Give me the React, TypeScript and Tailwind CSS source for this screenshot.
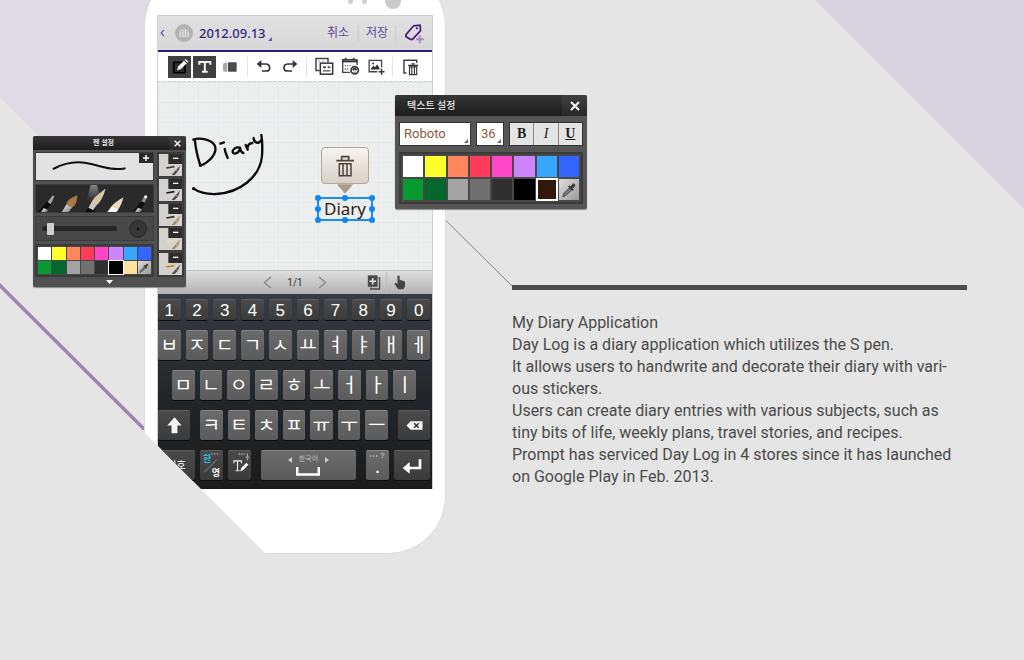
import React, { useState } from "react";

type Children = { children?: React.ReactNode };

const BASE_COLORS = [
  "#ffffff", "#ffff2b", "#ff855c", "#ff3b5c", "#ff47c8", "#cc85ff", "#38a6ff", "#3366ff",
  "#079a2e", "#04672c", "#a3a3a3", "#707070", "#303030",
];
const TEXT_COLORS = [...BASE_COLORS, "#000000", "#321809"];
const PEN_COLORS = [...BASE_COLORS, "#000000", "#ffe0a0"];

function Dropper({ className }: { className: string }) {
  return (
    <svg viewBox="0 0 20 20" className={className} aria-hidden="true">
      <path d="M3 17.5 L4.2 14 L10.4 7.6 L12.8 10 L6.6 16.2 Z" fill="#777" stroke="#444" strokeWidth="1" />
      <path d="M9 6.2 L10.6 4.8 L11.8 5.8 L14 3.2 C15.4 2 17.8 3.8 16.8 5.8 L14.2 8.4 L15.2 9.6 L13.8 11.2 Z" fill="#3a3a3a" />
    </svg>
  );
}

function Cross({ className }: { className: string }) {
  return (
    <svg viewBox="0 0 10 10" className={className} aria-hidden="true">
      <path d="M1 1 L9 9 M9 1 L1 9" stroke="#fff" strokeWidth="1.9" />
    </svg>
  );
}

function ToolDivider() {
  return <span className="mx-[3px] h-5 w-px shrink-0 bg-[#e2e2e2]" />;
}

function TitleBar() {
  return (
    <header className="flex h-[36px] items-center border-b-2 border-[#2c1d7d] bg-linear-to-b from-[#e0e0e0] to-[#d8d8d8]">
      <button aria-label="Back" className="flex w-[17px] justify-start pl-[2px]">
        <svg viewBox="0 0 5 9" className="h-[8px] w-[5px]" aria-hidden="true">
          <path d="M4.2 1 L1 4.5 L4.2 8" fill="none" stroke="#5846a4" strokeWidth="1.3" />
        </svg>
      </button>
      <svg viewBox="0 0 54 54" className="size-[18px] shrink-0" aria-hidden="true">
        <circle cx="27" cy="27" r="27" fill="#b3b3b3" />
        <path d="M16 22 V40 M24 17 V40 M31 17 V40 M39 23 V40" stroke="#e4e4e4" strokeWidth="4" />
        <path d="M14 22 L23 16 M31 17 L39 22" stroke="#e4e4e4" strokeWidth="2.5" />
      </svg>
      <button className="ml-[6px] flex items-end font-['Noto_Sans',sans-serif] text-[13px] leading-[18px] font-medium text-[#35277f]">
        2012.09.13
        <svg viewBox="0 0 4 4" className="mb-[1px] ml-[2px] size-[4px]" aria-hidden="true">
          <path d="M4 0 V4 H0 Z" fill="#6a5aae" />
        </svg>
      </button>
      <button className="ml-auto w-10 text-[12px] leading-[18px] text-[#5b4c9e]">취소</button>
      <span className="h-4 w-px bg-[#cbcbcb]" />
      <button className="w-9 text-[12px] leading-[18px] text-[#5b4c9e]">저장</button>
      <span className="h-4 w-px bg-[#cbcbcb]" />
      <button aria-label="Add tag" className="flex w-9 justify-center">
        <svg viewBox="792 70 62 64" className="h-[21px] w-[20px]" aria-hidden="true">
          <path d="M798 106 L822 78 L842 76 L843 94 L818 120 H811 L798 111 Z" fill="none" stroke="#4a1d7a" strokeWidth="5.500" strokeLinejoin="round" />
          <circle cx="832" cy="86" r="3.500" fill="#4a1d7a" />
          <path d="M841 108 V132 M829 120 H853" stroke="#a684cc" strokeWidth="6" />
        </svg>
      </button>
    </header>
  );
}

function Toolbar() {
  return (
    <div className="flex h-[29px] items-center bg-white pl-[10px]">
      <button aria-label="Pen" className="mr-[2px] flex w-[23px] shrink-0 justify-center bg-[#404042]">
        <svg viewBox="84 168 69 66" className="h-[22px] w-[23px]" aria-hidden="true">
          <rect x="101" y="187" width="34" height="31" fill="#2e2e2e" stroke="#000" strokeWidth="5" />
          <path d="M111 211 L115 199 L132 182 L140 190 L123 207 Z" fill="#fff" />
          <path d="M134 180 L137 177 L145 185 L142 188 Z" fill="#fff" />
        </svg>
      </button>
      <button aria-label="Text" className="flex w-[23px] shrink-0 justify-center bg-[#404042]">
        <svg viewBox="159 168 69 66" className="h-[22px] w-[23px]" aria-hidden="true">
          <path d="M178 194 V186 H211 V194 M194.500 186 V215 M186 215 H203" fill="none" stroke="#f4f4f4" strokeWidth="6" />
        </svg>
      </button>
      <button aria-label="Eraser" className="flex w-[28px] shrink-0 justify-center">
        <svg viewBox="246 182 48 36" className="h-[12px] w-[16px]" aria-hidden="true">
          <path d="M262 187 H254 Q249 187 249 192 V209 Q249 214 254 214 H262 Z" fill="#a9a9a9" />
          <rect x="264" y="186" width="26" height="28" rx="2" fill="#4b4b4b" />
        </svg>
      </button>
      <ToolDivider />
      <button aria-label="Undo" className="flex w-[26px] shrink-0 justify-center">
        <svg viewBox="350 180 48 42" className="h-[14px] w-[16px]" aria-hidden="true">
          <path d="M359 192 H381 Q391 193 391 203 Q391 213 381 213 H368" fill="none" stroke="#333" strokeWidth="5" />
          <path d="M352 192 L366 180 V204 Z" fill="#333" />
        </svg>
      </button>
      <button aria-label="Redo" className="flex w-[26px] shrink-0 justify-center">
        <svg viewBox="426 180 48 42" className="h-[14px] w-[16px]" aria-hidden="true">
          <path d="M465 192 H443 Q432 193 432 203 Q432 213 443 213 H456" fill="none" stroke="#333" strokeWidth="5" />
          <path d="M472 192 L458 180 V204 Z" fill="#333" />
        </svg>
      </button>
      <ToolDivider />
      <button aria-label="Copy" className="flex w-[28px] shrink-0 justify-center">
        <svg viewBox="525 172 57 56" className="h-[19px] w-[19px]" aria-hidden="true">
          <path d="M539 212 H528 V176 H564 V187" fill="none" stroke="#444" strokeWidth="4.500" />
          <rect x="541" y="190" width="37" height="33" fill="#fff" stroke="#333" strokeWidth="4.500" />
          <path d="M549 202 H558 M563 202 H571" stroke="#555" strokeWidth="6" />
          <path d="M549 213 H571" stroke="#555" strokeWidth="4" />
          <path d="M535 184 H541 M546 184 H552" stroke="#999" strokeWidth="3" />
        </svg>
      </button>
      <button aria-label="Calendar" className="flex w-[25px] shrink-0 justify-center">
        <svg viewBox="603 174 57 57" className="h-[19px] w-[19px]" aria-hidden="true">
          <path d="M630 220 H608 V182 H651 V198" fill="none" stroke="#444" strokeWidth="4" />
          <path d="M606 187 H653" stroke="#333" strokeWidth="6" />
          <path d="M617 176 V184 M641 176 V184" stroke="#333" strokeWidth="5" />
          <path d="M614 200 H634 M614 210 H628" stroke="#777" strokeWidth="4" strokeDasharray="4 3" />
          <circle cx="644" cy="214" r="11" fill="#fff" stroke="#333" strokeWidth="5" />
          <path d="M636 211 Q644 202 652 211 L648 215 L644 212 L640 215 Z" fill="#333" />
          <path d="M639 218 H649 Q644 224 639 218 Z" fill="#333" />
        </svg>
      </button>
      <button aria-label="Insert image" className="flex w-[26px] shrink-0 justify-center">
        <svg viewBox="680 176 57 52" className="h-[17px] w-[19px]" aria-hidden="true">
          <path d="M711 218 H686 V183 H724 V205" fill="none" stroke="#444" strokeWidth="4" />
          <path d="M691 210 L699 199 L704 204 L711 195 L718 208 V211 H691 Z" fill="#333" />
          <circle cx="698" cy="193" r="3" fill="#333" />
          <path d="M724 209 V227 M715 218 H733" stroke="#333" strokeWidth="4.500" />
        </svg>
      </button>
      <ToolDivider />
      <button aria-label="Delete page" className="flex w-[29px] shrink-0 justify-center">
        <svg viewBox="784 172 50 55" className="h-[18px] w-[17px]" aria-hidden="true">
          <path d="M797 218 H789 V179 H828 V187" fill="none" stroke="#444" strokeWidth="4.500" />
          <path d="M802 195 H832 M812 190 H822" stroke="#333" strokeWidth="4" />
          <path d="M806 199 H828 V223 H806 Z M813 199 V222 M821 199 V222" fill="none" stroke="#333" strokeWidth="3.500" />
        </svg>
      </button>
    </div>
  );
}

const HANDLES = [
  "-left-1 -top-1", "left-1/2 -ml-[3px] -top-1", "-right-1 -top-1",
  "-left-1 top-1/2 -mt-[3px]", "-right-1 top-1/2 -mt-[3px]",
  "-left-1 -bottom-1", "left-1/2 -ml-[3px] -bottom-1", "-right-1 -bottom-1",
];

function DiaryCanvas() {
  return (
    <div className="relative h-[189px] border-t border-dashed border-[#cfcfcf] bg-[#edefef] bg-[linear-gradient(#e3e8eb_1px,transparent_1px),linear-gradient(90deg,#e3e8eb_1px,transparent_1px),linear-gradient(#eaedee_1px,transparent_1px),linear-gradient(90deg,#eaedee_1px,transparent_1px)] bg-size-[20px_20px,20px_20px,5px_5px,5px_5px]">
      <svg viewBox="0 0 270 240" className="absolute top-[38px] left-[21px] h-[80px] w-[90px]" role="img" aria-label="Handwriting">
        <g fill="none" stroke="#0a0a0a" strokeWidth="7" strokeLinecap="round" strokeLinejoin="round">
          <path d="M48 62 C50 90 58 118 64 137" />
          <path d="M43 59 C62 52 98 58 108 78 C116 102 88 128 64 137" />
          <path d="M137 87 C139 98 143 106 146 114 M124 71 L135 67" />
          <path d="M183 83 C171 79 160 88 161 97 C166 107 182 97 183 85 C185 92 188 98 193 99" />
          <path d="M200 75 L206 89 C204 79 209 70 220 69" />
          <path d="M224 54 C224 69 240 74 247 60 M247 45 C250 62 250 92 249 108 C243 172 182 218 112 222 C84 223 58 216 44 206" />
        </g>
        <circle cx="44" cy="206" r="5" fill="#0a0a0a" />
      </svg>
      <div className="absolute top-[65px] left-[163px] flex flex-col items-center">
        <button aria-label="Delete text" className="flex h-[37px] w-[48px] items-center justify-center rounded-[4px] border border-[#b3a797] bg-linear-to-b from-[#f8f4ef] to-[#d9d0c6]">
          <svg viewBox="466 98 60 66" className="h-[22px] w-[20px]" aria-hidden="true">
            <path d="M470 115 H523 M486 113 V103 H507 V113" fill="none" stroke="#4d443e" strokeWidth="5" />
            <path d="M479 124 H514 V160 H479 Z M490 124 V160 M502 124 V160" fill="none" stroke="#4d443e" strokeWidth="4.500" />
          </svg>
        </button>
        <svg viewBox="0 0 15 9" className="h-[10px] w-[16px]" aria-hidden="true">
          <path d="M0 0 H15 L7.500 9 Z" fill="#a89c8a" />
        </svg>
      </div>
      <div className="absolute top-[115px] left-[159px] flex h-[24px] w-[56px] items-center justify-center border-2 border-[#1a8cf5] font-['Noto_Sans',sans-serif] text-[17px] leading-[20px] text-[#2b1c12]">
        Diary
        {HANDLES.map((place) => (
          <span key={place} className={`absolute size-[6px] rounded-full bg-[#0f84f2] ${place}`} />
        ))}
      </div>
    </div>
  );
}

function Pager() {
  return (
    <nav className="grid h-[24px] grid-cols-[1fr_auto_1fr] items-center border-t border-[#c4c4c4] bg-linear-to-b from-[#dedede] to-[#b2b2b2]">
      <span />
      <div className="flex items-center gap-[15px] text-[10px] leading-[14px] text-[#333]">
        <button aria-label="Previous page">
          <svg viewBox="0 0 9 13" className="h-[13px] w-[9px]" aria-hidden="true">
            <path d="M8 1 L1.500 6.500 L8 12" fill="none" stroke="#8d8d8d" strokeWidth="1.500" />
          </svg>
        </button>
        <span>1/1</span>
        <button aria-label="Next page">
          <svg viewBox="0 0 9 13" className="h-[13px] w-[9px]" aria-hidden="true">
            <path d="M1 1 L7.500 6.500 L1 12" fill="none" stroke="#8d8d8d" strokeWidth="1.500" />
          </svg>
        </button>
      </div>
      <div className="flex items-center justify-end pr-5">
        <button aria-label="Add page" className="flex w-[25px] justify-center">
          <svg viewBox="682 42 42 46" className="h-[15px] w-[14px]" aria-hidden="true">
            <path d="M716 51 H720 V85 H693 V80" fill="none" stroke="#4a4a4a" strokeWidth="4" />
            <rect x="684" y="43" width="30" height="35" fill="#4a4a4a" />
            <path d="M699 51 V71 M689 61 H709" stroke="#e6e6e6" strokeWidth="4.500" />
          </svg>
        </button>
        <span className="h-[22px] w-px bg-[#bdbdbd]" />
        <button aria-label="Touch mode" className="flex w-[25px] justify-center">
          <svg viewBox="760 42 38 46" className="h-[15px] w-[12px]" aria-hidden="true">
            <path d="M771 44 Q775 41 778 45 V58 Q782 55 784 59 Q788 57 790 61 Q795 60 795 65 V76 L790 86 H773 L763 71 Q761 66 766 66 L771 70 Z" fill="#454545" />
          </svg>
        </button>
      </div>
    </nav>
  );
}

function Key({ tone = "light", size = "flex-1", label, children }: Children & { tone?: "light" | "dark"; size?: string; label?: string }) {
  const shade =
    tone === "light"
      ? "bg-linear-to-b from-[#6b6b6b] to-[#5b5b5b] border-t-[#848484]"
      : "bg-linear-to-b from-[#4a4a4a] to-[#3b3b3b] border-t-[#5c5c5c]";
  return (
    <button
      aria-label={label}
      className={`flex h-full min-w-0 items-center justify-center rounded-[2px] border-t shadow-[0_1px_0_#0c0d0e] ${shade} ${size}`}
    >
      {children}
    </button>
  );
}

function Keyboard() {
  return (
    <div className="flex flex-col gap-[10px] bg-linear-to-b from-[#363d42] via-[#22272b] to-[#1b1b1b] pt-[4px] pr-[2px] pb-[9px] text-[19px] leading-none text-white">
      <div className="flex h-[22px] gap-[5px] pt-px font-['Liberation_Sans',sans-serif] text-[17px]">
        {"1234567890".split("").map((c) => (
          <Key key={c} tone="dark">{c}</Key>
        ))}
      </div>
      <div className="flex h-[30px] gap-[5px]">
        {"ㅂㅈㄷㄱㅅㅛㅕㅑㅐㅔ".split("").map((c) => (
          <Key key={c}>{c}</Key>
        ))}
      </div>
      <div className="flex h-[30px] gap-[5px] px-[14px]">
        {"ㅁㄴㅇㄹㅎㅗㅓㅏㅣ".split("").map((c) => (
          <Key key={c}>{c}</Key>
        ))}
      </div>
      <div className="flex h-[30px] gap-[10px]">
        <Key tone="dark" size="w-8" label="Shift">
          <svg viewBox="80 152 46 52" className="h-[17px] w-[15px]" aria-hidden="true">
            <path d="M103 153 L125 178 H112 V202 H94 V178 H81 Z" fill="#f5f5f5" />
          </svg>
        </Key>
        <div className="flex flex-1 gap-[5px]">
          {"ㅋㅌㅊㅍㅠㅜㅡ".split("").map((c) => (
            <Key key={c}>{c}</Key>
          ))}
        </div>
        <Key tone="dark" size="w-8" label="Backspace">
          <svg viewBox="798 166 52 28" className="h-[9px] w-[17px]" aria-hidden="true">
            <path d="M799 180 L812 167 H849 V193 H812 Z" fill="#f5f5f5" />
            <path d="M823 173 L837 187 M837 173 L823 187" stroke="#333" strokeWidth="5" />
          </svg>
        </Key>
      </div>
      <div className="flex h-[30px] gap-[10px]">
        <div className="flex gap-[5px]">
          <Key tone="dark" size="w-[37px]"><span className="text-[10px]">기호</span></Key>
          <Key tone="dark" size="w-[23px]">
            <span className="relative flex h-full w-full flex-col justify-between px-[3px] pt-[3px] pb-[2px] text-[9px] leading-[10px]">
              <span className="self-start font-bold text-[#25bfe0]">한</span>
              <svg viewBox="0 0 23 30" className="absolute inset-0 h-full w-full" aria-hidden="true">
                <path d="M4 22 L17 9" stroke="#999" strokeWidth="0.800" />
                <path d="M11 3 H20" stroke="#aaa" strokeWidth="1.200" strokeDasharray="1.500 1.500" />
              </svg>
              <span className="self-end font-bold">영</span>
            </span>
          </Key>
          <Key tone="dark" size="w-[23px]" label="Handwriting input">
            <svg viewBox="263 255 67 88" className="h-[29px] w-[22px]" aria-hidden="true">
              <path d="M278 292 V285 H301 V292 M289 285 V315 M283 315 H295" fill="none" stroke="#f0f0f0" strokeWidth="3.500" />
              <path d="M297 317 L301 306 L316 291 L322 297 L307 312 Z" fill="#fff" />
              <path d="M293 264 H310" stroke="#aaa" strokeWidth="4" strokeDasharray="4 3" />
              <path d="M319 262 V275 M314 272 Q319 280 324 272 M319 277 V283" fill="none" stroke="#999" strokeWidth="4" />
            </svg>
          </Key>
        </div>
        <Key label="Space">
          <span className="flex flex-col items-center gap-[3px]">
            <span className="flex items-center gap-[7px] text-[7px] leading-[9px] text-[#bdbdbd]">
              <svg viewBox="0 0 4 6" className="h-[6px] w-[4px]" aria-hidden="true"><path d="M4 0 V6 L0 3 Z" fill="#c9c9c9" /></svg>
              한국어
              <svg viewBox="0 0 4 6" className="h-[6px] w-[4px]" aria-hidden="true"><path d="M0 0 V6 L4 3 Z" fill="#c9c9c9" /></svg>
            </span>
            <svg viewBox="0 0 24 9" className="h-[9px] w-[24px]" aria-hidden="true">
              <path d="M1.200 0 V7.500 H22.800 V0" fill="none" stroke="#fff" strokeWidth="2.500" />
            </svg>
          </span>
        </Key>
        <div className="flex gap-[5px]">
          <Key size="w-[23px]">
            <span className="flex h-full flex-col items-end justify-between pb-[5px] font-['Liberation_Sans',sans-serif] font-bold">
              <span className="flex items-center gap-px text-[8px] leading-[9px] text-[#b5b5b5]">
                <svg viewBox="0 0 9 2" className="h-[2px] w-[9px]" aria-hidden="true">
                  <path d="M0 1 H9" stroke="#b5b5b5" strokeWidth="1.500" strokeDasharray="1.500 1.500" />
                </svg>
                ?
              </span>
              <span className="self-center text-[14px] leading-[14px]">.</span>
            </span>
          </Key>
          <Key tone="dark" size="w-[36px]" label="Enter">
            <svg viewBox="782 274 60 48" className="h-[16px] w-[20px]" aria-hidden="true">
              <path d="M836 278 V304 H802" fill="none" stroke="#fff" strokeWidth="8" />
              <path d="M784 304 L805 286 V321 Z" fill="#fff" />
            </svg>
          </Key>
        </div>
      </div>
    </div>
  );
}

function Phone() {
  return (
    <div className="-mt-8 ml-[144px] w-[302px] rounded-[58px] border border-[#dcdcdc] bg-white px-[12px] pb-[64px] [clip-path:polygon(0_0,100%_0,100%_100%,122px_100%,0_calc(100%_-_122px))]">
      <div className="flex h-[46px] items-start justify-end pt-[24px] pr-8">
        <div className="flex h-4 items-center">
          <span className="mr-[9px] size-[5px] rounded-full bg-[#cfcfcf]" />
          <span className="mr-[18px] size-[5px] rounded-full bg-[#cfcfcf]" />
          <span className="size-4 rounded-full bg-[#cacaca]" />
        </div>
      </div>
      <div className="border border-b-0 border-[#cfcfcf]">
        <TitleBar />
        <Toolbar />
        <DiaryCanvas />
        <Pager />
        <Keyboard />
      </div>
    </div>
  );
}

function TextSettings() {
  const [color, setColor] = useState("#321809");
  return (
    <section aria-label="텍스트 설정" className="absolute top-[95px] left-[395px] w-[192px] rounded-[2px] bg-[#555] pb-[5px] shadow-[0_1px_1px_#8a8a8a]">
      <header className="flex h-[21px] items-center justify-between rounded-t-[2px] bg-linear-to-b from-[#363636] to-[#1d1d1d] pl-3 text-[10px] leading-[14px] font-medium text-[#e6e6e6]">
        텍스트 설정
        <button aria-label="Close text settings" className="flex h-full w-[25px] items-center justify-center bg-white/5">
          <Cross className="size-[10px]" />
        </button>
      </header>
      <div className="mx-1 mt-[6px] flex h-[24px] gap-[5px] font-['Roboto',sans-serif] text-[13px] text-[#8a5a3c]">
        <div className="relative flex-1">
          <select aria-label="Font" defaultValue="Roboto" className="h-full w-full appearance-none border border-[#333] bg-white pl-[4px]">
            <option>Roboto</option>
          </select>
          <svg viewBox="0 0 4 4" className="pointer-events-none absolute right-[3px] bottom-[3px] size-[4px]" aria-hidden="true"><path d="M4 0 V4 H0 Z" fill="#666" /></svg>
        </div>
        <div className="relative w-[28px]">
          <select aria-label="Font size" defaultValue="36" className="h-full w-full appearance-none border border-[#333] bg-white pl-[4px]">
            <option>36</option>
          </select>
          <svg viewBox="0 0 4 4" className="pointer-events-none absolute right-[3px] bottom-[3px] size-[4px]" aria-hidden="true"><path d="M4 0 V4 H0 Z" fill="#666" /></svg>
        </div>
        <div className="grid w-[74px] grid-cols-3 gap-px border border-[#333] bg-[#888] font-['Liberation_Serif',serif] text-[14px] leading-none text-[#222]">
          <button className="bg-[#e4e4e4] font-bold">B</button>
          <button className="bg-[#e4e4e4] italic">I</button>
          <button className="bg-[#e4e4e4] font-bold underline">U</button>
        </div>
      </div>
      <div className="mx-1 mt-[6px] grid grid-cols-8 gap-[2px] border-2 border-[#3a3a3a] bg-[#484848] px-[2px] py-[2px]">
        {TEXT_COLORS.map((c) => (
          <button
            key={c}
            aria-label={`Text colour ${c}`}
            onClick={() => setColor(c)}
            style={{ backgroundColor: c }}
            className={`h-[21px] ${c === color ? "outline-2 -outline-offset-1 outline-white" : ""}`}
          />
        ))}
        <button aria-label="Pick text colour" className="flex h-[21px] items-center justify-center bg-linear-to-br from-[#dedede] to-[#9a9a9a]">
          <Dropper className="size-[18px]" />
        </button>
      </div>
    </section>
  );
}

const PRESETS = [
  { ink: "#3c3c3c", tip: "#4f4f4f" },
  { ink: "#0e1a2c", tip: "#4f4f4f" },
  { ink: "#2c3328", tip: "#a18a6c" },
  { ink: "#eadfb0", tip: "#a18a6c" },
  { ink: "#c98a22", tip: "#4f4f4f" },
];

function PenSettings() {
  const [color, setColor] = useState("#000000");
  return (
    <section aria-label="펜 설정" className="absolute top-[136px] left-[33px] w-[153px] rounded-[2px] bg-[#505050] shadow-[0_1px_1px_#8a8a8a]">
      <header className="grid h-[14px] grid-cols-[17px_1fr_17px] items-center rounded-t-[2px] bg-linear-to-b from-[#363636] to-[#1d1d1d] text-center text-[7px] leading-[10px] font-bold text-[#e0e0e0]">
        <span />
        <span className="pr-3">펜 설정</span>
        <button aria-label="Close pen settings" className="flex h-full items-center justify-center bg-white/5">
          <Cross className="size-[7px]" />
        </button>
      </header>
      <div className="flex gap-[3px] px-[2px] pt-[2px]">
        <div className="flex flex-1 flex-col gap-[3px]">
          <div className="relative h-[29px] border border-[#3a3a3a] bg-[#e2e2e2]">
            <svg viewBox="35 83 350 84" preserveAspectRatio="none" className="h-full w-full" aria-hidden="true">
              <path d="M88 132 C120 114 150 108 185 114 C225 121 255 138 300 131" fill="none" stroke="#111" strokeWidth="6.500" strokeLinecap="round" />
            </svg>
            <button aria-label="Add preset" className="absolute top-0 right-0 flex h-[10px] w-[14px] items-center justify-center bg-[#2b2b2b]">
              <svg viewBox="0 0 6 6" className="size-[6px]" aria-hidden="true"><path d="M3 0 V6 M0 3 H6" stroke="#fff" strokeWidth="1.400" /></svg>
            </button>
          </div>
          <div className="h-[29px] border border-[#3a3a3a] bg-[#2a2a2a]">
            <svg viewBox="35 177 350 82" preserveAspectRatio="none" className="h-full w-full" role="img" aria-label="Pen types">
              <defs>
                <radialGradient id="beam" cx="0.5" cy="0" r="1">
                  <stop offset="0" stopColor="#b0b0b0" />
                  <stop offset="0.55" stopColor="#555" />
                  <stop offset="1" stopColor="#2a2a2a" stopOpacity="0" />
                </radialGradient>
                <linearGradient id="metal" x1="0" y1="0" x2="1" y2="1">
                  <stop offset="0" stopColor="#f4f4f4" />
                  <stop offset="1" stopColor="#777" />
                </linearGradient>
              </defs>
              <path d="M198 177 H218 L234 240 H182 Z" fill="url(#beam)" opacity="0.700" />
              <path d="M40 259 L68 228 L80 236 L62 259 Z" fill="#0c0c0c" />
              <path d="M50 259 L58 247 L71 253 L66 259 Z" fill="url(#metal)" />
              <path d="M70 229 L85 208 L90 212 L79 235 Z" fill="#a5a5a5" />
              <path d="M112 259 L126 236 L144 244 L133 259 Z" fill="url(#metal)" />
              <path d="M126 237 C128 220 144 214 159 208 C158 222 156 238 143 245 Z" fill="#a87848" />
              <path d="M182 259 L197 240 L213 250 L206 259 Z" fill="#080808" />
              <path d="M192 246 L200 231 L216 238 L206 254 Z" fill="#c8c8c8" />
              <path d="M200 232 C206 216 226 202 243 188 C238 208 230 228 216 239 Z" fill="#d8c9a4" />
              <path d="M248 259 L262 240 C270 230 284 222 296 215 C294 230 287 243 276 259 Z" fill="#e9d8bd" />
              <path d="M252 259 L262 243 L281 251 L275 259 Z" fill="#fff" />
              <path d="M325 259 L350 226 L361 232 L344 259 Z" fill="#0a0a0a" />
              <path d="M331 259 L340 246 L352 251 L346 259 Z" fill="url(#metal)" />
              <path d="M350 226 L358 212 L367 216 L360 231 Z" fill="#888" />
              <circle cx="363" cy="213" r="5" fill="#f2f2f2" />
            </svg>
          </div>
          <div className="flex h-[25px] items-center justify-between border border-[#3a3a3a] bg-[#484848] pr-[6px] pl-[6px]">
            <input
              type="range"
              aria-label="Pen size"
              defaultValue={8}
              className="h-[5px] w-[75px] appearance-none rounded-full bg-[#262626] [&::-webkit-slider-thumb]:h-[12px] [&::-webkit-slider-thumb]:w-[7px] [&::-webkit-slider-thumb]:appearance-none [&::-webkit-slider-thumb]:rounded-[1px] [&::-webkit-slider-thumb]:bg-[#cfcfcf]"
            />
            <span className="flex size-[18px] items-center justify-center rounded-full border border-[#2a2a2a] bg-[#363636]">
              <span className="size-[2px] rounded-full bg-black" />
            </span>
          </div>
          <div className="grid grid-cols-8 gap-px border-2 border-[#3a3a3a] bg-[#484848] p-px">
            {PEN_COLORS.map((c) => (
              <button
                key={c}
                aria-label={`Pen colour ${c}`}
                onClick={() => setColor(c)}
                style={{ backgroundColor: c }}
                className={`h-[13px] ${c === color ? "outline-1 outline-white" : ""}`}
              />
            ))}
            <button aria-label="Pick pen colour" className="flex h-[13px] items-center justify-center bg-linear-to-br from-[#dedede] to-[#9a9a9a]">
              <Dropper className="size-[12px]" />
            </button>
          </div>
        </div>
        <div className="flex w-[27px] flex-col justify-between border border-[#3a3a3a] bg-[#3f3f3f] p-px">
          {PRESETS.map((p, i) => (
            <button key={i} aria-label={`Preset ${i + 1}`}>
              <svg viewBox="0 0 69 66" preserveAspectRatio="none" className="h-[22px] w-full" aria-hidden="true">
                <rect width="69" height="66" fill="#d5d2cd" />
                <path d="M28 0 H69 V30 H28 Z" fill="#2c2c2c" />
                <path d="M42 13 H58" stroke="#fff" strokeWidth="4" />
                <path d="M22 42 L46 38" stroke={p.ink} strokeWidth="5" />
                <path d="M38 62 L50 49 L56 54 L46 64 Z" fill={p.tip} />
                <path d="M51 48 L64 34 L57 53 Z" fill={p.tip} />
              </svg>
            </button>
          ))}
        </div>
      </div>
      <button aria-label="Collapse" className="flex h-[10px] w-full items-center justify-center">
        <svg viewBox="0 0 7 4" className="h-[4px] w-[7px]" aria-hidden="true"><path d="M0 0 H7 L3.500 4 Z" fill="#fff" /></svg>
      </button>
    </section>
  );
}

function Backdrop() {
  return (
    <div className="pointer-events-none absolute inset-0" aria-hidden="true">
      <svg viewBox="0 0 512 430" className="absolute top-0 left-0 h-[430px] w-[512px]">
        <path d="M0 0 H300 V397 L0 97 Z" fill="#dedce2" />
        <path d="M-4 281.500 L150 435" stroke="#9f85b0" strokeWidth="3.500" />
        <path d="M446 220.500 L512 286" stroke="#8a78b0" strokeWidth="1" />
      </svg>
      <svg viewBox="0 0 209 209" className="absolute top-0 right-0 size-[209px]">
        <path d="M0 0 H209 V209 Z" fill="#d7d4df" />
      </svg>
    </div>
  );
}

export default function App() {
  return (
    <main className="relative flex min-h-screen items-start overflow-hidden bg-[#e5e5e5] font-['Roboto','Noto_Sans_CJK_KR',sans-serif]">
      <Backdrop />
      <div className="relative w-[512px] shrink-0">
        <Phone />
        <PenSettings />
        <TextSettings />
      </div>
      <article className="relative mt-[285px] mr-14 max-w-[455px] flex-1 border-t-[5px] border-[#4b4b4b] pt-[22px] text-[16px] leading-[22px] text-[#4b4b4b]">
        <h1>My Diary Application</h1>
        <p>Day Log is a diary application which utilizes the S pen.</p>
        <p>
          It allows users to handwrite and decorate their diary with vari-
          <br />
          ous stickers.
        </p>
        <p>
          Users can create diary entries with various subjects, such as
          <br />
          tiny bits of life, weekly plans, travel stories, and recipes.
        </p>
        <p>
          Prompt has serviced Day Log in 4 stores since it has launched
          <br />
          on Google Play in Feb. 2013.
        </p>
      </article>
    </main>
  );
}
